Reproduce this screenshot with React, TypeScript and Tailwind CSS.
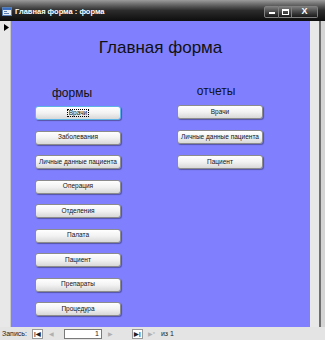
import React from 'react'

const formButtons = [
  'Врачи',
  'Заболевания',
  'Личные данные пациента',
  'Операция',
  'Отделения',
  'Палата',
  'Пациент',
  'Препараты',
  'Процедура',
]

const reportButtons = ['Врачи', 'Личные данные пациента', 'Пациент']

function FormButton({ label, focused }: { label: string; focused?: boolean }) {
  return (
    <button
      className={`flex h-[14px] w-[86px] items-center justify-center rounded-[3px] border bg-gradient-to-b from-white via-[#f2f2f2] to-[#d8d8d8] text-[6.5px] leading-none text-[#111] shadow-[1px_1px_1px_rgba(0,0,0,0.35)] ${
        focused ? 'border-[#5fb4e6]' : 'border-[#8c8c8c]'
      }`}
    >
      <span className={focused ? 'border border-dotted border-black px-[1px]' : ''}>{label}</span>
    </button>
  )
}

function NavButton({ children, disabled, boxed }: { children: React.ReactNode; disabled?: boolean; boxed?: boolean }) {
  return (
    <span
      className={`flex h-[10px] w-[11px] items-center justify-center text-[6px] leading-none ${
        boxed ? 'border border-[#9a9a9a] bg-white' : ''
      } ${disabled ? 'text-[#b0b0b0]' : 'font-bold text-[#222]'}`}
    >
      {children}
    </span>
  )
}

export default function App() {
  return (
    <div className="flex h-[340px] w-[325px] flex-col overflow-hidden bg-[#e4e4e4] font-['Liberation_Sans',Arial,sans-serif]">
      {/* Title bar */}
      <div className="flex h-[21px] items-center bg-gradient-to-b from-[#9c9c9c] via-[#2c2c2c] to-[#0e0e0e] pl-[2px] pr-[7px] pt-[2px]">
        <svg width="10" height="9" viewBox="0 0 10 9" className="mr-[3px]">
          <rect x="0.5" y="0.5" width="9" height="8" fill="#e8eef8" stroke="#5a7fb5" />
          <rect x="1" y="1" width="8" height="2" fill="#3d6fc0" />
          <rect x="2" y="4" width="3" height="1" fill="#5a7fb5" />
          <rect x="2" y="6" width="5" height="1" fill="#5a7fb5" />
        </svg>
        <span className="text-[7.5px] font-bold text-white">Главная форма : форма</span>
        <div className="ml-auto flex h-[12px] items-stretch">
          <div className="flex w-[15px] items-end justify-center rounded-l-[2px] border border-[#808080] bg-gradient-to-b from-[#7a7a7a] to-[#1a1a1a] pb-[3px]">
            <div className="h-[2px] w-[6px] bg-white" />
          </div>
          <div className="flex w-[13px] items-center justify-center border-y border-r border-[#808080] bg-gradient-to-b from-[#7a7a7a] to-[#1a1a1a]">
            <div className="h-[6px] w-[7px] border border-t-2 border-white" />
          </div>
          <div className="flex w-[26px] items-center justify-center rounded-r-[2px] border-y border-r border-[#808080] bg-gradient-to-b from-[#7a7a7a] to-[#1a1a1a] text-[9px] font-bold leading-none text-white">
            X
          </div>
        </div>
      </div>

      {/* Body */}
      <div className="flex flex-1">
        <div className="w-[11px] border-r border-[#c8c8c8] bg-[#e8e8e8] pl-[4px] pt-[3px]">
          <svg width="5" height="7" viewBox="0 0 5 7">
            <path d="M0 0 L5 3.5 L0 7 Z" fill="#000" />
          </svg>
        </div>
        <div className="flex flex-1 flex-col bg-[#8080ff] pt-[16px]">
          <div className="text-center text-[17px] leading-[22px] text-[#111]">Главная форма</div>
          <div className="flex">
            <div className="ml-[24px] mt-[26px] flex w-[86px] flex-col">
              <div className="mb-[5px] pr-[12px] text-center text-[12px] leading-[16px] text-[#111]">формы</div>
              <div className="flex flex-col gap-[10.5px]">
                {formButtons.map((b, i) => (
                  <FormButton key={b} label={b} focused={i === 0} />
                ))}
              </div>
            </div>
            <div className="ml-[56px] mt-[24px] flex w-[86px] flex-col">
              <div className="mb-[6px] pr-[8px] text-center text-[12px] leading-[16px] text-[#111]">отчеты</div>
              <div className="flex flex-col gap-[11px]">
                {reportButtons.map((b) => (
                  <FormButton key={b} label={b} />
                ))}
              </div>
            </div>
          </div>
        </div>
        <div className="w-[9px] bg-[#e8e8e8]" />
        <div className="w-[2px] bg-[#6e6e6e]" />
        <div className="w-[4px] bg-[#d4d4d4]" />
      </div>

      {/* Status bar */}
      <div className="flex h-[13px] items-center gap-[3px] pl-[2px] text-[7px] leading-none text-[#222]">
        <span className="mr-[2px]">Запись:</span>
        <NavButton boxed>|◀</NavButton>
        <NavButton disabled>◀</NavButton>
        <span className="ml-[4px] flex h-[10px] w-[38px] items-center justify-end border border-[#7a7a7a] bg-white pr-[2px]">1</span>
        <NavButton disabled>▶</NavButton>
        <span className="w-[10px]" />
        <NavButton boxed>▶|</NavButton>
        <NavButton disabled>▶*</NavButton>
        <span className="ml-[1px]">из 1</span>
      </div>
    </div>
  )
}
